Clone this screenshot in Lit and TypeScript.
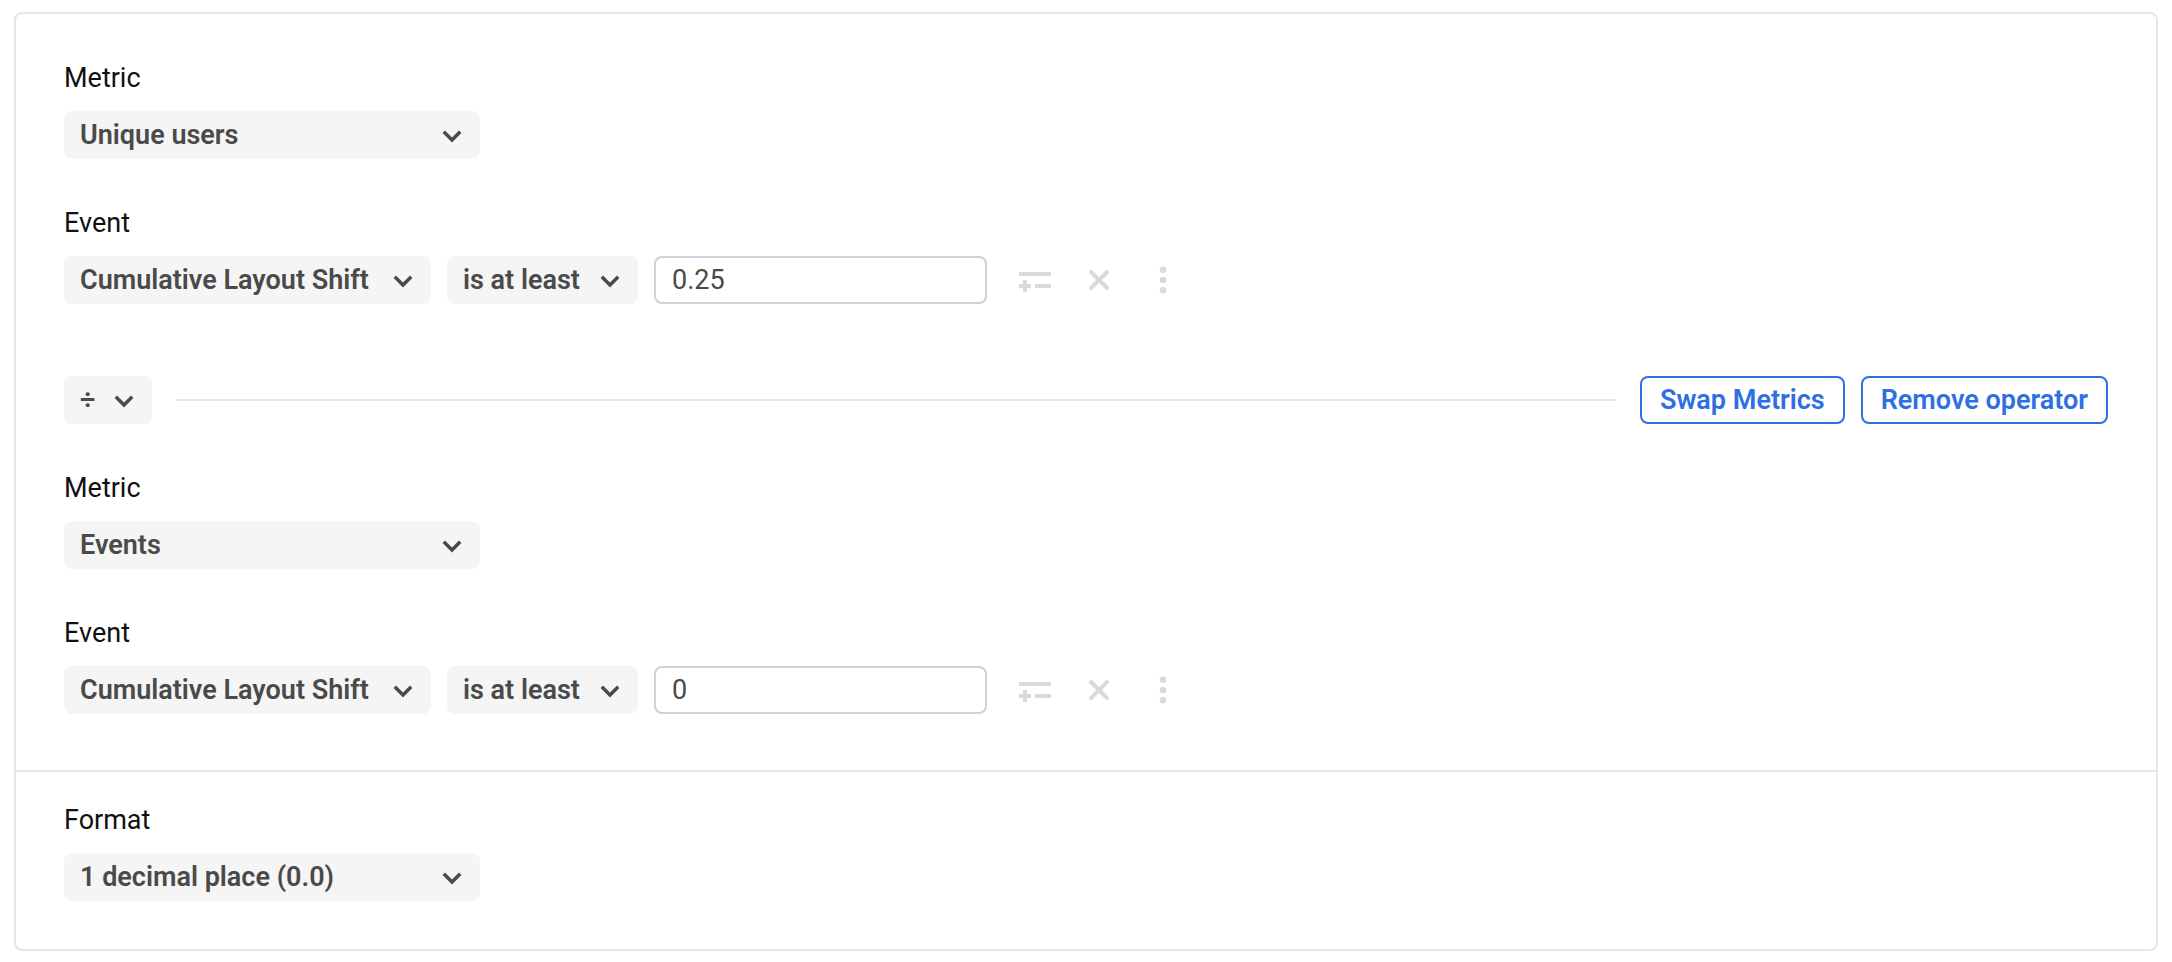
import { LitElement, html, css, svg } from "lit";
import { customElement, property } from "lit/decorators.js";

const base = css`
  * {
    box-sizing: border-box;
  }
  select,
  input,
  button {
    margin: 0;
    font-family: Roboto, "Liberation Sans", sans-serif;
    font-size: 27px;
    height: 48px;
    border-radius: 8px;
  }
  svg {
    display: block;
  }
`;

const glyphs = {
  group: svg`<path d="M0 8h32v4H0zM4 16h4v4h4v4H8v4H4v-4H0v-4h4zM16 20h16v4H16z" fill="currentColor"/>`,
  close: svg`<path d="M8 8L24 24M24 8L8 24" fill="none" stroke="currentColor" stroke-width="4" stroke-linecap="round"/>`,
  more: svg`<g fill="currentColor"><circle cx="16" cy="5.7" r="3.3"/><circle cx="16" cy="16" r="3.3"/><circle cx="16" cy="26.3" r="3.3"/></g>`,
};

@customElement("pick-list")
export class PickList extends LitElement {
  @property() label = "";
  @property({ attribute: false }) options: string[] = [];

  static styles = [
    base,
    css`
      :host {
        display: block;
      }
      .box {
        display: grid;
        align-items: center;
        color: #4a4a4a;
      }
      .select {
        grid-area: 1 / 1;
        width: 100%;
        appearance: none;
        border: 0;
        padding: 0 48px 0 16px;
        background: #f5f5f5;
        color: inherit;
        font-weight: 600;
      }
      .chevron {
        grid-area: 1 / 1;
        justify-self: end;
        margin: 2px 18px 0 0;
        pointer-events: none;
      }
    `,
  ];

  render() {
    return html`<div class="box">
      <select class="select" aria-label=${this.label}>
        ${this.options.map((o) => html`<option>${o}</option>`)}
      </select>
      <svg class="chevron" width="20" height="14" viewBox="0 0 20 14" aria-hidden="true">
        <path d="M1.8 2.8L10 11L18.2 2.8" fill="none" stroke="currentColor" stroke-width="3.4" />
      </svg>
    </div>`;
  }
}

@customElement("metric-editor")
export class MetricEditor extends LitElement {
  @property() metric = "";
  @property() threshold = "";

  static styles = [
    base,
    css`
      :host {
        display: flex;
        flex-direction: column;
        gap: 48px;
      }
      .field {
        display: flex;
        flex-direction: column;
        gap: 16px;
      }
      .label {
        line-height: 33px;
      }
      .metric {
        width: 416px;
      }
      .row {
        display: flex;
        align-items: center;
        gap: 16px;
      }
      .event {
        width: 367px;
      }
      .comparison {
        width: 191px;
      }
      .value {
        width: 333px;
        padding: 0 16px;
        border: 2px solid #d0cfdc;
        background: #fff;
        color: #4a4a4a;
      }
      .actions {
        display: flex;
        gap: 32px;
        padding-left: 16px;
      }
      .action {
        width: 32px;
        height: 32px;
        padding: 0;
        border: 0;
        background: none;
        color: #dadada;
      }
    `,
  ];

  private action(name: string, glyph: unknown) {
    return html`<button class="action" type="button" aria-label=${name}>
      <svg width="32" height="32" viewBox="0 0 32 32" aria-hidden="true">${glyph}</svg>
    </button>`;
  }

  render() {
    return html`
      <div class="field">
        <span class="label">Metric</span>
        <pick-list class="metric" label="Metric" .options=${[this.metric]}></pick-list>
      </div>
      <div class="field">
        <label class="label" for="value">Event</label>
        <div class="row">
          <pick-list class="event" label="Event" .options=${["Cumulative Layout Shift"]}></pick-list>
          <pick-list class="comparison" label="Comparison" .options=${["is at least"]}></pick-list>
          <input class="value" id="value" type="text" .value=${this.threshold} />
          <div class="actions">
            ${this.action("Add condition", glyphs.group)}
            ${this.action("Remove event", glyphs.close)}
            ${this.action("More options", glyphs.more)}
          </div>
        </div>
      </div>
    `;
  }
}

@customElement("app-root")
export class AppRoot extends LitElement {
  static styles = [
    base,
    css`
      :host {
        display: block;
        padding: 12px 14px 11px;
        background: #fff;
        color: #111;
        font-family: Roboto, "Liberation Sans", sans-serif;
        font-size: 27px;
      }
      .card {
        border: 2px solid #e3e7ec;
        border-radius: 8px;
      }
      .formula {
        padding: 48px 48px 56px;
      }
      .operator {
        display: flex;
        align-items: center;
        margin: 72px 0 48px;
      }
      .symbol {
        width: 88px;
      }
      .rule {
        flex: 1;
        margin: 0 24px;
        border: 0;
        border-top: 2px solid #e3e7ec;
      }
      .buttons {
        display: flex;
        gap: 16px;
      }
      .button {
        padding: 0 18px;
        border: 2px solid #2f6fe4;
        background: #fff;
        color: #2f6fe4;
        font-weight: 600;
      }
      .format {
        display: flex;
        flex-direction: column;
        gap: 16px;
        padding: 32px 48px 48px;
        border-top: 2px solid #e3e7ec;
      }
      .label {
        line-height: 33px;
      }
      .places {
        width: 416px;
      }
    `,
  ];

  render() {
    return html`<main class="card">
      <section class="formula">
        <metric-editor metric="Unique users" threshold="0.25"></metric-editor>
        <div class="operator">
          <pick-list class="symbol" label="Operator" .options=${["÷"]}></pick-list>
          <hr class="rule" />
          <div class="buttons">
            <button class="button" type="button">Swap Metrics</button>
            <button class="button" type="button">Remove operator</button>
          </div>
        </div>
        <metric-editor metric="Events" threshold="0"></metric-editor>
      </section>
      <section class="format">
        <span class="label">Format</span>
        <pick-list class="places" label="Format" .options=${["1 decimal place (0.0)"]}></pick-list>
      </section>
    </main>`;
  }
}
